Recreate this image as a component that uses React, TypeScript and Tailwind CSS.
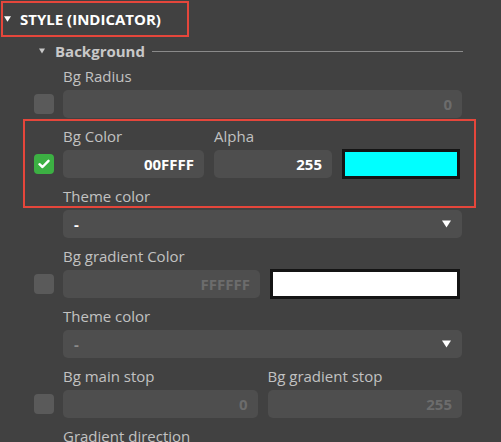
import React from 'react';

function Tri({ className, w = 7, h = 6 }: { className?: string; w?: number; h?: number }) {
  return (
    <svg width={w} height={h} viewBox="0 0 10 8" className={className}>
      <path d="M0 0 L10 0 L5 8 Z" fill="currentColor" />
    </svg>
  );
}

function Check({ on }: { on?: boolean }) {
  if (!on) return <div className="w-[20px] h-[20px] shrink-0 rounded-[4px] bg-[#5a5a5a]" />;
  return (
    <div className="w-[20px] h-[20px] shrink-0 rounded-[4px] bg-[#3cb043] flex items-center justify-center">
      <svg width="12" height="10" viewBox="0 0 12 10">
        <path d="M1.5 5.2 L4.5 8 L10.5 1.8" fill="none" stroke="white" strokeWidth="2.4" strokeLinecap="round" strokeLinejoin="round" />
      </svg>
    </div>
  );
}

function Field({ value, disabled, className }: { value: string; disabled?: boolean; className?: string }) {
  return (
    <div
      className={`h-[28px] rounded-[5px] bg-[#4e4e4e] flex items-center justify-end pr-[10px] text-[15px] font-bold ${
        disabled ? 'text-[#6c6c6c]' : 'text-white'
      } ${className ?? ''}`}
    >
      {value}
    </div>
  );
}

function Swatch({ color, className }: { color: string; className?: string }) {
  return <div className={`h-[30px] -my-px border-[3px] border-[#141414] ${color} ${className ?? ''}`} />;
}

function Select({ disabled }: { disabled?: boolean }) {
  return (
    <div className="h-[28px] rounded-[5px] bg-[#4e4e4e] flex items-center justify-between pl-[11px] pr-[11px]">
      <span className={`text-[15px] font-bold ${disabled ? 'text-[#8a8a8a]' : 'text-white'}`}>-</span>
      <Tri w={9} h={8} className="text-white" />
    </div>
  );
}

function Label({ children }: { children: React.ReactNode }) {
  return <div className="h-[20px] leading-[20px] text-[15px] text-[#c2c2c2] whitespace-nowrap">{children}</div>;
}

export default function App() {
  return (
    <div
      className="relative w-[501px] h-[442px] overflow-hidden bg-[#414141]"
      style={{ fontFamily: '"Open Sans", "Noto Sans", sans-serif' }}
    >
      {/* section header */}
      <div className="ml-[1px] mt-[1px] w-[188px] h-[36px] border-2 border-[#e5463b] flex items-center pl-[1px] gap-[9px]">
        <Tri className="text-white" />
        <span className="text-[15px] font-bold text-white leading-[20px]">STYLE (INDICATOR)</span>
      </div>

      {/* group header */}
      <div className="mt-[4px] h-[20px] flex items-center pl-[39px] pr-[38px]">
        <Tri w={6} h={6} className="text-[#c8c8c8]" />
        <span className="ml-[10px] text-[15px] font-bold text-[#c8c8c8] leading-[20px]">Background</span>
        <div className="ml-[7px] flex-1 h-px bg-[#8a8a8a]" />
      </div>

      <div className="mt-[5px] pl-[34px] pr-[39px] flex flex-col gap-[8px]">
        {/* Bg Radius */}
        <div className="flex flex-col gap-[4px]">
          <div className="pl-[29px]">
            <Label>Bg Radius</Label>
          </div>
          <div className="flex items-center gap-[9px]">
            <Check />
            <Field value="0" disabled className="flex-1" />
          </div>
        </div>

        {/* Bg Color */}
        <div className="flex flex-col gap-[4px]">
          <div className="pl-[29px] flex gap-[10px]">
            <div className="w-[141px]">
              <Label>Bg Color</Label>
            </div>
            <Label>Alpha</Label>
          </div>
          <div className="flex items-center gap-[9px]">
            <Check on />
            <div className="flex-1 flex items-center gap-[10px]">
              <Field value="00FFFF" className="w-[141px]" />
              <Field value="255" className="w-[118px]" />
              <Swatch color="bg-[#00ffff]" className="w-[118px]" />
            </div>
          </div>
        </div>

        {/* Theme color */}
        <div className="flex flex-col gap-[4px] pl-[29px]">
          <Label>Theme color</Label>
          <Select />
        </div>

        {/* Bg gradient Color */}
        <div className="flex flex-col gap-[4px]">
          <div className="pl-[29px]">
            <Label>Bg gradient Color</Label>
          </div>
          <div className="flex items-center gap-[9px]">
            <Check />
            <div className="flex-1 flex items-center gap-[10px]">
              <Field value="FFFFFF" disabled className="w-[197px]" />
              <Swatch color="bg-white" className="w-[190px]" />
            </div>
          </div>
        </div>

        {/* Theme color */}
        <div className="flex flex-col gap-[4px] pl-[29px]">
          <Label>Theme color</Label>
          <Select disabled />
        </div>

        {/* stops */}
        <div className="flex flex-col gap-[4px]">
          <div className="pl-[29px] flex gap-[10px]">
            <div className="flex-1">
              <Label>Bg main stop</Label>
            </div>
            <div className="flex-1">
              <Label>Bg gradient stop</Label>
            </div>
          </div>
          <div className="flex items-center gap-[9px]">
            <Check />
            <div className="flex-1 flex items-center gap-[10px]">
              <Field value="0" disabled className="flex-1" />
              <Field value="255" disabled className="flex-1" />
            </div>
          </div>
        </div>

        <div className="pl-[29px]">
          <Label>Gradient direction</Label>
        </div>
      </div>

      {/* highlight around Bg Color row */}
      <div className="absolute left-[23px] top-[119px] w-[453px] h-[89px] border-2 border-[#e5463b] pointer-events-none" />
    </div>
  );
}
